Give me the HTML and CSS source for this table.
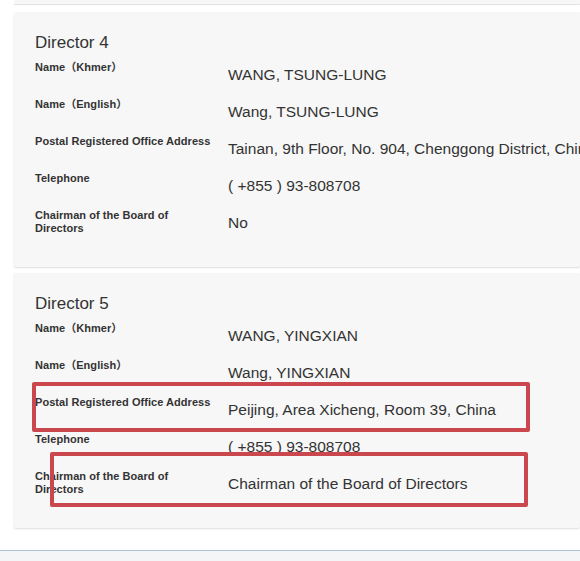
FILE: index.html
```html
<!DOCTYPE html>
<html>
<head>
<meta charset="utf-8">
<link rel="stylesheet" href="styles.css">
</head>
<body>
<div class="page">
  <div class="card-stub"></div>
  <section class="card">
    <h2 class="title">Director 4</h2>
    <div class="row"><div class="label">Name（Khmer）</div><div class="value">WANG, TSUNG-LUNG</div></div>
    <div class="row"><div class="label">Name（English）</div><div class="value">Wang, TSUNG-LUNG</div></div>
    <div class="row"><div class="label">Postal Registered Office Address</div><div class="value">Tainan, 9th Floor, No. 904, Chenggong District, China</div></div>
    <div class="row"><div class="label">Telephone</div><div class="value">( +855 ) 93-808708</div></div>
    <div class="row"><div class="label">Chairman of the Board of Directors</div><div class="value">No</div></div>
  </section>
  <section class="card">
    <h2 class="title">Director 5</h2>
    <div class="row"><div class="label">Name（Khmer）</div><div class="value">WANG, YINGXIAN</div></div>
    <div class="row"><div class="label">Name（English）</div><div class="value">Wang, YINGXIAN</div></div>
    <div class="row"><div class="label">Postal Registered Office Address</div><div class="value">Peijing, Area Xicheng, Room 39, China</div></div>
    <div class="row"><div class="label">Telephone</div><div class="value">( +855 ) 93-808708</div></div>
    <div class="row"><div class="label">Chairman of the Board of Directors</div><div class="value">Chairman of the Board of Directors</div></div>
    <div class="mark mark-address"></div>
    <div class="mark mark-chairman"></div>
  </section>
  <div class="footer-bar"></div>
</div>
</body>
</html>
```

FILE: styles.css
```css
html, body {
  margin: 0;
  padding: 0;
  background: #ffffff;
  overflow: hidden;
}
.page {
  width: 580px;
  height: 561px;
  font-family: "Liberation Sans", Arial, "Noto Sans CJK SC", sans-serif;
  color: #333333;
  display: flex;
  flex-direction: column;
}
.card-stub {
  margin-left: 14px;
  height: 4px;
  background: #f7f7f7;
  box-shadow: 0 1px 1px rgba(0, 0, 0, 0.12);
  flex: none;
}
.card {
  position: relative;
  flex: none;
  margin: 8px 0 0 14px;
  width: 566px;
  height: 255px;
  box-sizing: border-box;
  padding: 21px 0 0 21px;
  background: #f7f7f7;
  box-shadow: 0 1px 2px rgba(0, 0, 0, 0.14);
  border-radius: 2px;
}
.card + .card {
  margin-top: 6px;
}
.title {
  margin: 0 0 8px;
  font-size: 17px;
  line-height: 20px;
  font-weight: normal;
  color: #333;
}
.row {
  display: grid;
  grid-template-columns: 180px auto;
  column-gap: 13px;
  height: 37px;
}
.label {
  font-size: 11px;
  line-height: 13px;
  font-weight: bold;
  letter-spacing: 0.05px;
  color: #333;
}
.value {
  margin-top: 4px;
  font-size: 15.5px;
  line-height: 20px;
  white-space: nowrap;
  color: #333;
}
.mark {
  position: absolute;
  box-sizing: border-box;
  border: 4px solid #c9474d;
  border-radius: 2px;
}
.mark-address {
  left: 18px;
  top: 109px;
  width: 498px;
  height: 50px;
}
.mark-chairman {
  left: 36px;
  top: 179px;
  width: 478px;
  height: 55px;
}
.footer-bar {
  margin-top: 22px;
  flex: 1;
  border-top: 1px solid #a9c3d4;
  background: #f3f5f7;
}
```
